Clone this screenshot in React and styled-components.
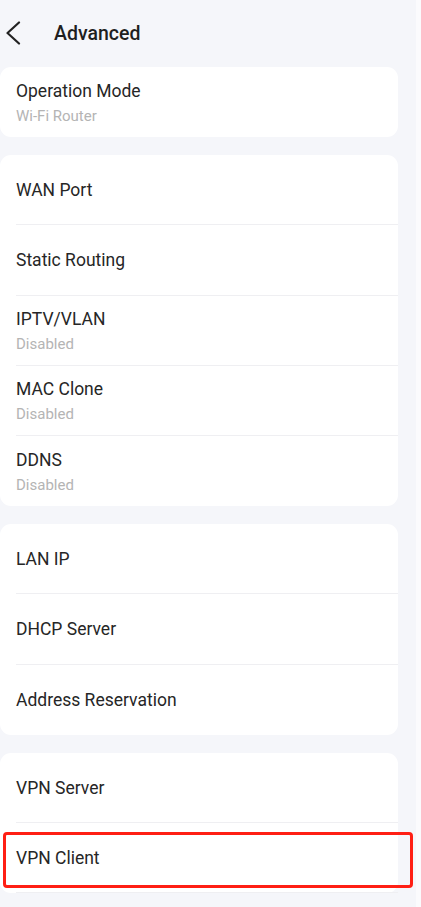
import React from "react";
import styled, { createGlobalStyle } from "styled-components";

const GlobalStyle = createGlobalStyle`
    html, body {
        margin: 0;
        padding: 0;
        background-color: #f5f6fa;
    }
    body {
        font-family: Roboto, "Noto Sans", "Liberation Sans", sans-serif;
        -webkit-font-smoothing: antialiased;
    }
`;

const Page = styled.div`
    display: flex;
    width: 421px;
    min-height: 907px;
    overflow: hidden;
`;

const Main = styled.div`
    width: 416px;
    flex-shrink: 0;
    background-color: #f5f6fa;
`;

const Edge = styled.div`
    flex: 1;
    background-color: #fbfbfd;
`;

const Header = styled.div`
    height: 67px;
    display: flex;
    align-items: center;
    padding-left: 5px;
    box-sizing: border-box;
`;

const BackButton = styled.button`
    width: 18px;
    height: 26px;
    padding: 0;
    border: none;
    background: none;
    display: flex;
    align-items: center;
    justify-content: flex-start;
    margin-right: 31px;
    margin-top: -1px;
`;

const Title = styled.h1`
    margin: 0;
    font-size: 19.5px;
    font-weight: 500;
    color: #1f1f1f;
`;

const CardList = styled.div`
    display: flex;
    flex-direction: column;
    gap: 18px;
    padding-right: 18px;
`;

const Card = styled.div`
    background-color: #fff;
    border-radius: 11px;
`;

const Row = styled.div`
    position: relative;
    height: 70.2px;
    display: flex;
    flex-direction: column;
    justify-content: center;
    padding-left: 16px;
    box-sizing: border-box;
    &::after {
        content: "";
        display: ${(p) => (p.$divider ? "block" : "none")};
        position: absolute;
        left: 16px;
        right: 0;
        bottom: 0;
        height: 1px;
        background-color: #efeff2;
    }
`;

const Label = styled.div`
    font-size: 17.5px;
    line-height: 24px;
    color: #262626;
`;

const Sub = styled.div`
    font-size: 15px;
    line-height: 20px;
    margin-top: 3px;
    color: #b4b4b4;
`;

const Highlight = styled.div`
    position: absolute;
    left: 3px;
    right: -15px;
    top: 9px;
    bottom: 5px;
    border: 3.5px solid #ff1f14;
    border-radius: 4px;
    pointer-events: none;
`;

const groups = [
    [{ label: "Operation Mode", sub: "Wi-Fi Router" }],
    [
        { label: "WAN Port" },
        { label: "Static Routing" },
        { label: "IPTV/VLAN", sub: "Disabled" },
        { label: "MAC Clone", sub: "Disabled" },
        { label: "DDNS", sub: "Disabled" },
    ],
    [
        { label: "LAN IP" },
        { label: "DHCP Server" },
        { label: "Address Reservation" },
    ],
    [
        { label: "VPN Server" },
        { label: "VPN Client", marked: true, divider: true },
    ],
];

function App() {
    return (
        <Page>
            <GlobalStyle />
            <Main>
                <Header>
                    <BackButton aria-label="Back">
                        <svg width="16" height="24" viewBox="0 0 16 24">
                            <polyline
                                points="14,1.5 2.5,12 14,22.5"
                                fill="none"
                                stroke="#222"
                                strokeWidth="2.2"
                                strokeLinecap="round"
                                strokeLinejoin="round"
                            />
                        </svg>
                    </BackButton>
                    <Title>Advanced</Title>
                </Header>
                <CardList>
                    {groups.map((items, gi) => (
                        <Card key={gi}>
                            {items.map((item, i) => (
                                <Row key={item.label} $divider={item.divider || i < items.length - 1}>
                                    <Label>{item.label}</Label>
                                    {item.sub && <Sub>{item.sub}</Sub>}
                                    {item.marked && <Highlight />}
                                </Row>
                            ))}
                        </Card>
                    ))}
                </CardList>
            </Main>
            <Edge />
        </Page>
    );
}

export default App;
